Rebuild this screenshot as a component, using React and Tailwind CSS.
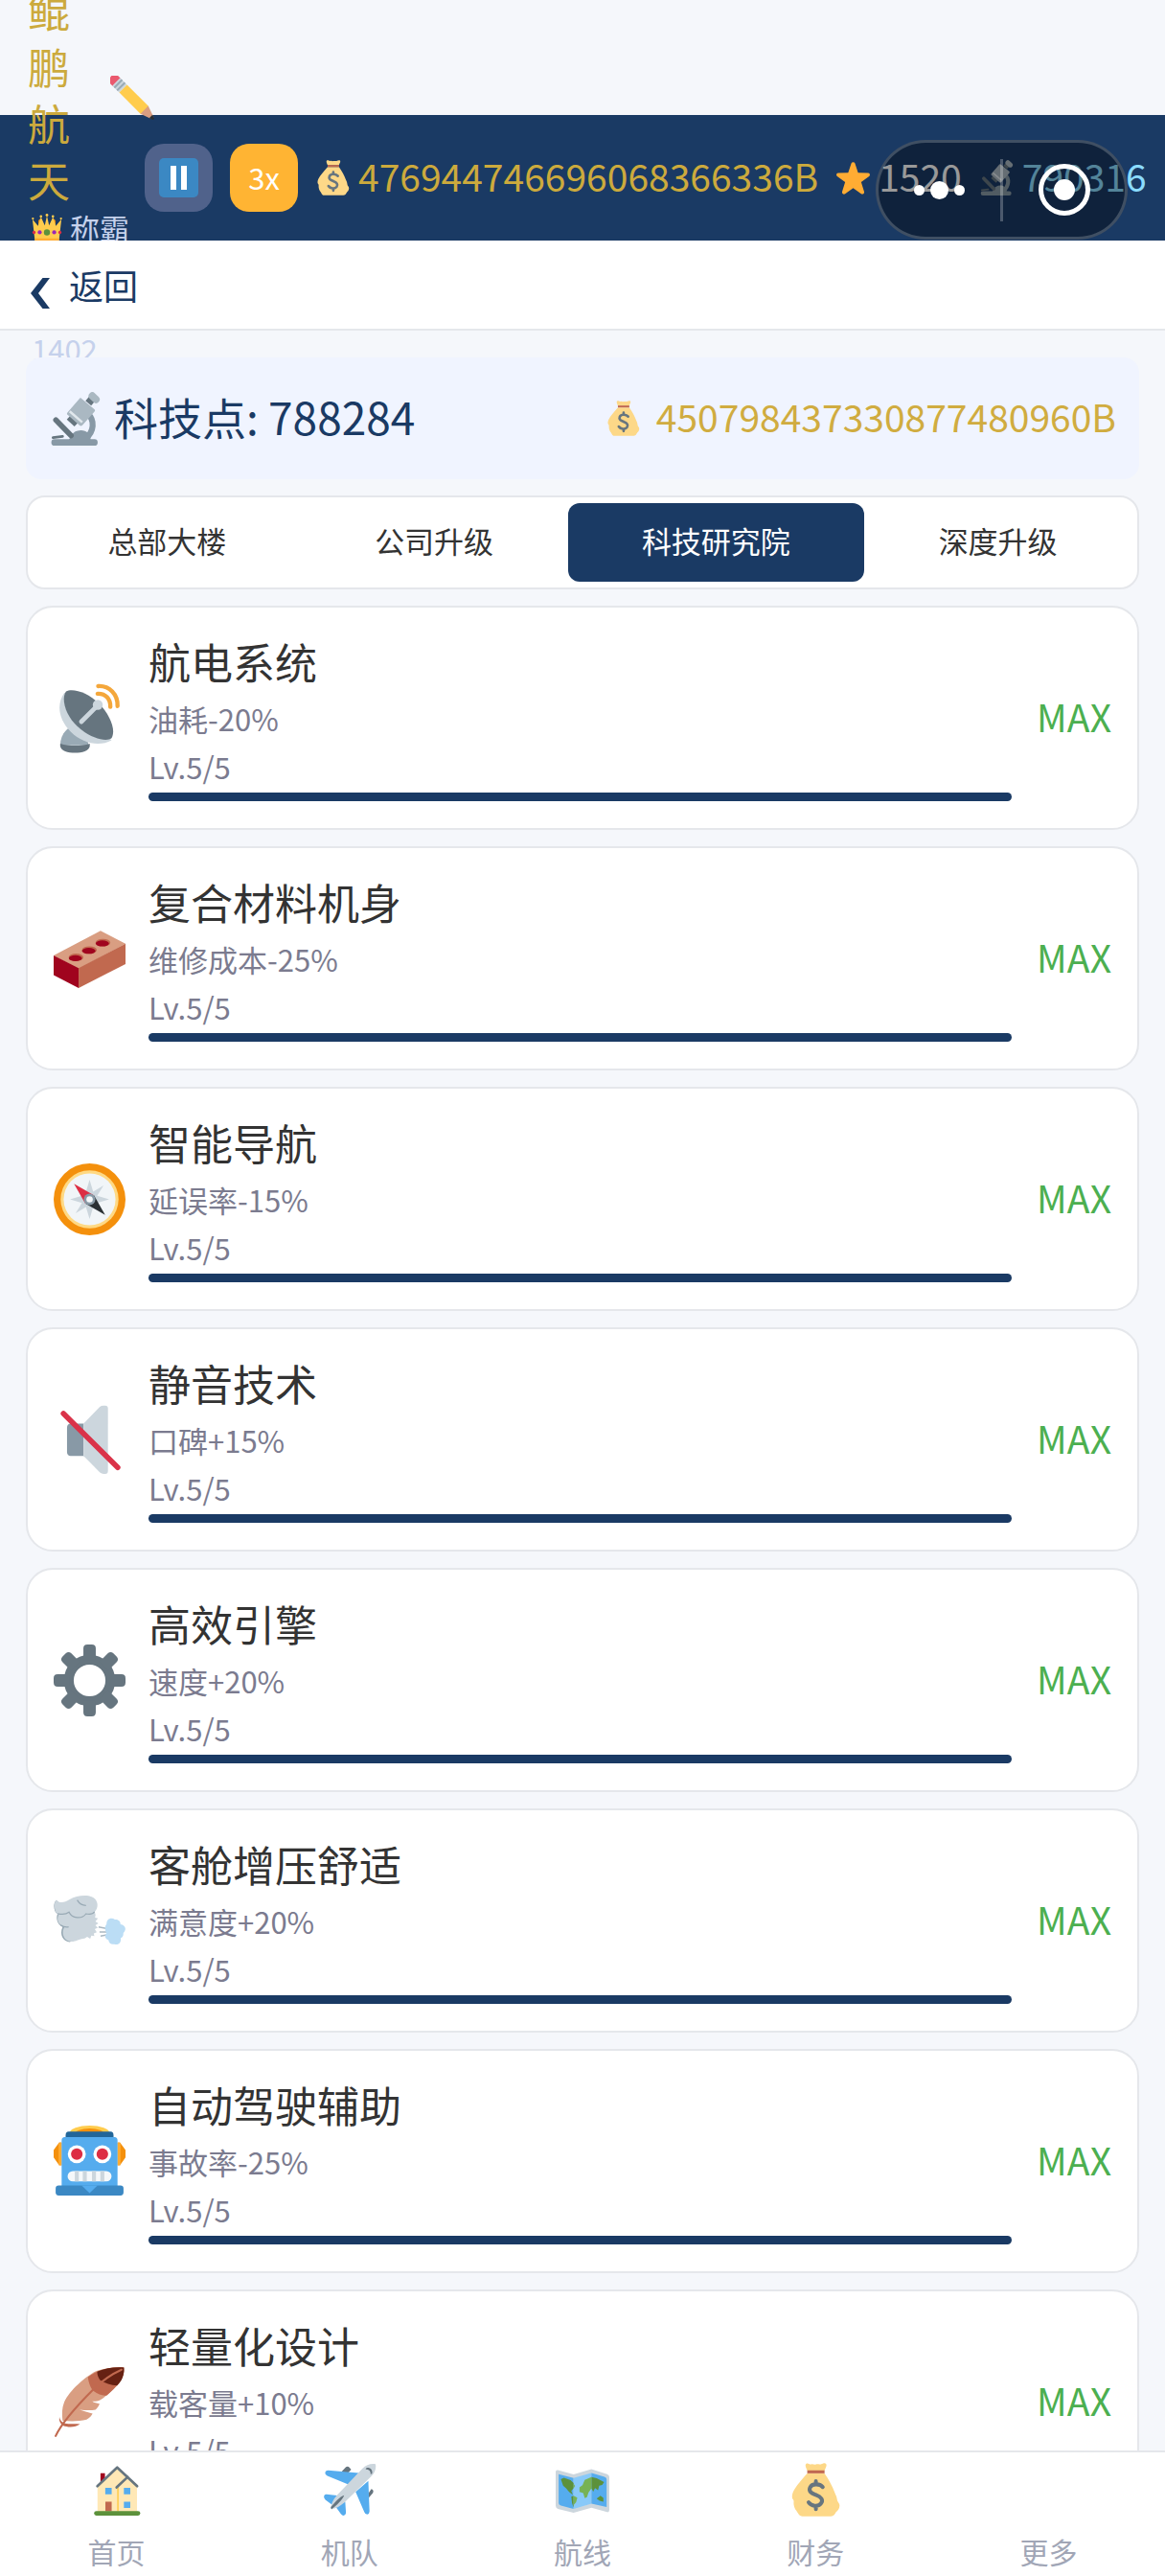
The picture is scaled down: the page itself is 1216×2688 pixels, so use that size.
import React from "react";

function Icon({ className, children }) {
  return (
    <svg viewBox="0 0 36 36" aria-hidden="true" className={"block shrink-0 " + className}>
      {children}
    </svg>
  );
}

const MoneyBag = ({ className }) => (
  <Icon className={className}>
    <path fill="#FDD888" d="M12.6 7C9 11 5 15.500 3.200 19.300 2.300 21.500 2.200 23 2.800 24.200c1.200 1 .5 2 .8 4 .4 2.800 1.800 3.800 2.600 5.300.6 1.200 1.500 2.300 3 2.300h19.300c1.800 0 2.800-1.500 3.400-2.800 1-.8 2.300-2 2.400-4.200 0-2-1.600-2.600-1.700-4.300-.2-1.500-.5-2.500-1.300-4C29.500 15.500 27 11 24.200 7z" />
    <path fill="#FDD888" d="M12.600 5.200C12 3.500 10.800 1.800 11.800.6c1.200-1 2.200.6 3.400.3 1.200-.4 2 .5 3.200.1 1.300-.4 2 .3 3.300-.1 1.200-.3 2.600-1.200 3.500-.3.900 1.300-.6 3-1 4.600z" />
    <path fill="#C1694F" d="M12.600 5h11.600v2H12.600z" />
    <path fill="none" stroke="#67757F" strokeWidth="2.600" strokeLinecap="round" d="M23 16.200c-1.500-2-7-2.900-8.500.2-1.400 3.400 2 4.200 4.300 5.200 3 1.100 4.800 3.300 3 5.600-2.100 2.600-6.500 1.700-8.300-.8M18.400 12.300v1.500M18.400 29v2" />
  </Icon>
);

const Star = ({ className }) => (
  <Icon className={className}>
    <path fill="#FFAC33" d="M27.287 34.627c-.404 0-.806-.124-1.152-.371L18 28.422l-8.135 5.834a1.970 1.970 0 0 1-2.312-.008 1.971 1.971 0 0 1-.721-2.194l3.034-9.792-8.062-5.681a1.980 1.980 0 0 1-.708-2.203 1.978 1.978 0 0 1 1.866-1.363L12.947 13l3.179-9.549a1.976 1.976 0 0 1 3.749 0L23 13l10.036.015a1.975 1.975 0 0 1 1.159 3.566l-8.062 5.681 3.034 9.792a1.970 1.970 0 0 1-.72 2.194 1.957 1.957 0 0 1-1.160.379z" />
  </Icon>
);

const Microscope = ({ className }) => (
  <Icon className={className}>
    <path fill="none" stroke="#8899A6" strokeWidth="4" d="M26 14.500c5 4.500 4.500 12-1.500 17" />
    <path fill="#8899A6" d="M3.800 31.700h9.700c1.500-1 1.500-5.800 8-6 4 0 6 2.500 6.500 6h2.600a2.150 2.150 0 0 1 0 4.300H3.800a2.150 2.150 0 0 1 0-4.300z" />
    <path fill="none" stroke="#66757F" strokeWidth="3.600" strokeLinecap="round" d="M4.700 18.800l10.200 10.400" />
    <path fill="none" stroke="#66757F" strokeWidth="1.800" strokeLinecap="round" d="M2.800 30.600l6.400-.8" />
    <path stroke="#66757F" strokeWidth="7" d="M14.600 20.800l2.600-2.800" />
    <path stroke="#66757F" strokeWidth="5" d="M26.500 7.500l3-3.500" />
    <path fill="#AAB8C2" d="M21.800 4.300l8.700 7.200c.7.600.5 1.200 0 1.800l-8 9c-.6.600-1.200.7-1.800.2l-8-7c-.7-.6-.7-1.200-.1-1.900l7.800-9c.4-.6.900-.7 1.400-.3z" />
    <path stroke="#E1E8ED" strokeWidth="1.600" d="M14 13l8.400 7.300" />
    <path stroke="#AAB8C2" strokeWidth="5" strokeLinecap="round" d="M29.200 2.700l2.400 2.300" />
  </Icon>
);

const Pencil = ({ className }) => (
  <Icon className={className}>
    <g transform="rotate(45)">
      <path fill="#EA596E" d="M3 -4.500h5v9H3Q.8 4.500 .8 2v-4Q.8-4.500 3-4.500z" />
      <path fill="#CCD6DD" d="M7 -4.500h8v9H7z" />
      <path fill="#99AAB5" d="M8.500 -4.500h1.600v9H8.500zM11.700 -4.500h1.600v9h-1.600z" />
      <path fill="#FFCC4D" d="M15 -4.500h25l1.500 4.500L40 4.500H15z" />
      <path fill="#D99E82" d="M39.500 -4.500L49 -1.200v2.400L39.500 4.500z" />
      <path fill="#292F33" d="M47 -1.900L50 -.8q.8.800 0 1.600L47 1.900z" />
    </g>
  </Icon>
);

const Crown = ({ className }) => (
  <Icon className={className}>
    <path fill="#F4900C" d="M10 7l3 10h10l3-10 2 2v20H8V9z" />
    <path fill="#FFCC4D" d="M1 7.500l6.500 8L11 5l4.500 10L18 3.500 20.500 15 25 5l3.500 10.500 6.500-8L32 34H4z" />
    <path fill="#FFAC33" d="M4 30h28v4H4z" />
    <g fill="#FFCC4D"><circle cx="1.500" cy="6.800" r="1.300" /><circle cx="11" cy="4.300" r="1.500" /><circle cx="18" cy="2.800" r="1.600" /><circle cx="25" cy="4.300" r="1.500" /><circle cx="34.500" cy="6.800" r="1.300" /></g>
    <circle cx="18" cy="23" r="3.600" fill="#5C913B" />
    <circle cx="9.500" cy="23" r="2.400" fill="#9B26B6" />
    <circle cx="26.500" cy="23" r="2.400" fill="#9B26B6" />
    <circle cx="2.800" cy="23" r="1.900" fill="#DD2E44" />
    <circle cx="33.200" cy="23" r="1.900" fill="#DD2E44" />
  </Icon>
);

const Satellite = ({ className }) => (
  <Icon className={className}>
    <path fill="#99AAB5" d="M3.300 31.500c0-3.500 1.500-6.500 4-8.500l10 7v1.500z" />
    <path fill="#66757F" d="M3.300 30.700c4.500 1.300 10.500 1.300 14.800 0v1.300c-.6 4.400-14.200 4.400-14.800 0z" />
    <path fill="#CCD6DD" d="M5.400 5.200C1.300 11 2.400 18.500 8.500 24.700 14.500 30.700 23 32.300 29 29z" />
    <path fill="#66757F" d="M6.200 4.500c3.500-1.800 11 .6 16.500 6 5.600 5.700 8.700 13.500 6.300 17.500-3 2.300-11.500-.6-17.200-6C6 16.500 3.600 8.500 6.200 4.500z" />
    <path stroke="#CCD6DD" strokeWidth="2.300" strokeLinecap="round" d="M13.900 19.700l8-8" />
    <circle cx="22.100" cy="11.300" r="2.500" fill="#CCD6DD" />
    <path fill="none" stroke="#F4A73B" strokeWidth="2.100" strokeLinecap="round" d="M22.300 1.900c5.600-.3 9.900 4.100 9.700 10M22 5.700c4-.2 6.600 2.700 6.400 6.600" />
  </Icon>
);

const Brick = ({ className }) => (
  <Icon className={className}>
    <path fill="#D99E82" d="M23.500 4L36 10.400 12.500 23 0 16.300z" />
    <path fill="#C1694F" d="M36 10.400v10.200l-23.500 12V22.700z" />
    <path fill="#A0041E" d="M0 16.300l12.500 6.400v9.900L0 26.200z" />
    <g fill="#C1694F"><ellipse cx="11.200" cy="17.300" rx="3.700" ry="1.900" /><ellipse cx="17.900" cy="13.600" rx="3.700" ry="1.900" /><ellipse cx="24.700" cy="9.900" rx="3.700" ry="1.900" /></g>
    <g fill="#A0041E"><ellipse cx="10.900" cy="17.700" rx="3.300" ry="1.500" /><ellipse cx="17.600" cy="14" rx="3.300" ry="1.500" /><ellipse cx="24.400" cy="10.300" rx="3.300" ry="1.500" /></g>
  </Icon>
);

const Compass = ({ className }) => (
  <Icon className={className}>
    <circle cx="18" cy="18" r="18" fill="#F4900C" />
    <circle cx="18" cy="18" r="14.500" fill="#FFD983" />
    <circle cx="18" cy="18" r="13" fill="#F1F5F8" />
    <path fill="#CCD6DD" d="M18 8.200l1.800 6 5.200-3.200-3.200 5.200 6 1.800-6 1.800 3.200 5.200-5.200-3.200-1.800 6-1.800-6-5.200 3.200 3.200-5.200-6-1.800 6-1.800-3.200-5.200 5.200 3.200z" />
    <path fill="#DD2E44" d="M10.200 10.200l9.800 5.600-4.200 4.200z" />
    <path fill="#292F33" d="M25.800 25.800l-9.800-5.600 4.200-4.200z" />
    <circle cx="18" cy="18" r="2.900" fill="#8899A6" />
    <circle cx="18" cy="18" r="1.600" fill="#F5F8FA" />
  </Icon>
);

const Mute = ({ className }) => (
  <Icon className={className}>
    <path fill="#8899A6" d="M8.500 9.800H15V26H8.500q-1.800 0-1.800-2V12q0-2.200 1.800-2.200z" />
    <path fill="#CCD6DD" d="M15 9.800L23 1.500q.8-.7 2-.7h.9q1.300 0 1.300 1.400v31.400q0 1.400-1.300 1.400H25q-1 0-1.800-.7L15 26z" />
    <path stroke="#DA3349" strokeWidth="2.700" strokeLinecap="round" d="M4.900 4.800l27.200 27" />
  </Icon>
);

const Gear = ({ className }) => (
  <Icon className={className}>
    <circle cx="18" cy="18" r="10.400" fill="none" stroke="#66757F" strokeWidth="4.900" />
    {[0, 45, 90, 135, 180, 225, 270, 315].map((a) => (
      <path key={a} transform={`rotate(${a} 18 18)`} fill="#66757F" d="M14.900 8V2q0-2 2-2h2.200q2 0 2 2v6z" />
    ))}
  </Icon>
);

const Wind = ({ className }) => (
  <Icon className={className}>
    <path fill="#99AAB5" d="M1.300 7.500C-.5 9 0 13.500 1.900 14.500 1 17 2 20 4.500 21 3 24 4 28 8 28.500l12-5z" />
    <path fill="#CCD6DD" d="M1.200 7.500C3 9.300 5.500 8.800 8 7.200c3.500-2 9-2.600 12-.9 2.500 1.700 2.500 5 .5 7.200.8 1.200.4 2.200.2 2.800l1.500.4-1.300 1.500 1.500 1-1.500.9 1.200 1.200-1.500.8 1 1.500-1.500.6.3 1.300-1.500-.2-.6 1.600-1.500-1-1.300.8C12 27 10.500 29 7.300 28c-3-1.400-3.300-5-1.800-7C2.500 20 1.200 17.500 2.500 15 .5 14-.3 9.500 1.200 7.500z" />
    <path fill="none" stroke="#99AAB5" strokeWidth=".6" d="M2 14.300c2 .5 4.500.2 5.700-.7 1.500 3.300 6.500 3.600 8.500.8 1.800.4 3.500.1 4.300-1M11.800 7.500c1 1.800 2.700 2.700 4.400 2.700M3.500 20c1.500 1 3 1.200 4 .9" />
    <path stroke="#AAB8C2" strokeWidth=".7" d="M22.500 21l5 1M23 23.500h5M23.500 25.600l5-1" />
    <path fill="#BBDDF5" d="M26.500 19.500c0-2.500 2.300-3.500 4.200-2.200 1.900-.2 2.800 1 2.800 2.400 2.400.3 3.300 2.600 1.400 4.300.2 1.600-.7 2.400-1.300 2.500.4 2.400-1.300 3.700-3.200 3.100-1.900.3-2.800-.8-2.900-2-1.800-.6-2.200-2.300-1-3.500-.9-1.500-1-3.500 0-4.600z" />
  </Icon>
);

const Robot = ({ className }) => (
  <Icon className={className}>
    <ellipse cx="18" cy="3.800" rx="10" ry="3.800" fill="#FFCC4D" />
    <ellipse cx="18" cy="4.600" rx="7.500" ry="3.200" fill="#F4900C" />
    <path fill="#F4900C" d="M4 8.400v11.500H2.800L0 16v-3.800l2.800-3.800zM32 8.400v11.500h1.200L36 16v-3.800l-2.800-3.800z" />
    <path fill="#FFAC33" d="M2.500 8.600H4v11.200H2.500zM32 8.600h1.500v11.200H32z" />
    <path fill="#55ACEE" d="M5.500 5.700h25Q32 5.700 32 7.500V31H4V7.500q0-1.800 1.500-1.800z" />
    <path fill="#226699" d="M7.500 3h21Q30 3 30 5v.8H6V5q0-2 1.500-2z" />
    <circle cx="11.600" cy="14.300" r="4.500" fill="#fff" /><circle cx="24.400" cy="14.300" r="4.500" fill="#fff" />
    <circle cx="11.600" cy="14.300" r="2.900" fill="#DD2E44" /><circle cx="24.400" cy="14.300" r="2.900" fill="#DD2E44" />
    <rect x="7" y="22.800" width="22" height="5.200" rx="2.600" fill="#F5F8FA" />
    <path fill="#CCD6DD" d="M10.600 22.800h2V28h-2zM14.600 22.800h2V28h-2zM19.200 22.800h2V28h-2zM23.400 22.800h2V28h-2z" />
    <path fill="#3B88C3" d="M2.500 30h31q1.500 0 1.500 1.500v2q0 1.500-1.500 1.500h-31Q1 35 1 33.500v-2Q1 30 2.500 30z" />
    <path fill="#55ACEE" d="M14 30h8l-4 3.800z" />
  </Icon>
);

const Feather = ({ className }) => (
  <Icon className={className}>
    <path fill="#D99E82" d="M35.200.7C31 .2 25 1 21 2.600 16 5.200 8 12 5.300 18c-1.200 3-1.200 6-.8 9.400 4.500.3 8.500.3 12-.6 1.600-1 2.600-2 3-3-2.500-.7-4.500-1.400-6.500-2 3 .3 5.500.5 8 0 1-1 1.600-1.900 2-3-1.500-.3-2.600-.5-3.700-1.200 3 .2 5-1 7-2.900 5-3.700 9.500-8.500 8.900-14z" />
    <path fill="#C1694F" d="M35.200.7C31 .2 22 1.500 17.200 5.500c.2 2.500 1.300 5.500 2.800 7 2.500 1.800 4.800 2.500 6.700 2.100 5-4.600 9.100-8.400 8.500-13.900z" />
    <path fill="#662113" d="M35.200.7C31 .3 26 .9 21.800 2.800c0 1.700.6 3 1.400 4.200 2.500 1.700 5.500 2.600 8.600 2.700 2.500-2.300 3.700-5.500 3.400-9z" />
    <path fill="none" stroke="#C1694F" strokeWidth="1" strokeLinecap="round" d="M1 35c3-6.500 9.500-14 19-23.500C24 7.600 28 4.500 34 1.800" />
    <path fill="#C1694F" d="M2.900 25.400c.3 2.300 2 3.300 4.500 3.500 2 0 3.500-.1 5.800.1-2.200 1.700-6 1.800-8.500.7-1.500-1-2.200-2.600-1.800-4.300z" />
  </Icon>
);

const House = ({ className }) => (
  <Icon className={className}>
    <path fill="#A0041E" d="M7 6.900h3V14H7z" />
    <path fill="#FFE8B6" d="M5 15L18.200 4l13.300 11v17.800H5z" />
    <path fill="#FFCC4D" d="M18.200 16h1v16.500h-1z" />
    <path fill="none" stroke="#66757F" strokeWidth="1.700" strokeLinecap="round" strokeLinejoin="round" d="M4.900 15.600L18.200 3l13.400 12.600M25.300 9.400l-7.500 7" />
    <path fill="#55ACEE" d="M10.200 16.700h4.300V21h-4.300zM22.700 16.700H27V21h-4.300zM22.700 26H27v4.200h-4.300z" />
    <path fill="#C1694F" d="M10.300 26h4.200v6.500h-4.200z" />
    <rect x="2.700" y="32.300" width="31" height="3" rx="1.500" fill="#5C913B" />
  </Icon>
);

const Plane = ({ className }) => (
  <Icon className={className}>
    <path fill="#66757F" d="M12.500 6l3-3.200q1.200-.8 2.300.3l1.200 1.400-3 3zM29.500 22l3 -4.500 1 .5q.8 1 0 2.200l-3.500 4z" />
    <path fill="#55ACEE" d="M1.500 6.500q.5-1.500 2-1.500L24 6.700l-6.500 8L3 8.700q-1.600-.6-1.500-2.200zM30.500 12l.8 20.500q0 1.700-1.500 2-1.500 0-2-1.500L22 19.500zM.7 22.500Q1 20.800 2.500 21l8.500 1-5 6-4.300-3.300Q.7 23.800.7 22.500zM15 26l.5 7.500q0 1.500-1.500 1.800-1.200 0-2-1.200l-3.500-4.800z" />
    <path fill="#CCD6DD" d="M35.300.8c.8 3-.6 6-3 8.300L14.500 26.500C11 29.500 8 31 5.300 30.700c0-2.500 1.400-6 4.300-9.200L26.500 3.800C29 1.400 32.200.2 35.300.8z" />
    <path fill="#66757F" d="M5.800 31.200l-.5-1.500c3-3.500 6-7 9-8-1.200 3.200-5 6.600-8.500 9.500zM29.200 3.300c2.500-.5 4.500 1.300 3.800 4l-1 .3c.2-2-1-3.200-3.300-3.200z" />
  </Icon>
);

const WorldMap = ({ className }) => (
  <Icon className={className}>
    <path fill="#CCD6DD" d="M0 6q0-1.500 1.500-1.200L12 7.700l12-3.500L34.500 7.500Q36 8 36 9.500v22q0 1.800-1.500 1.500L24 30l-12 3.500L1.500 30.800Q0 30.300 0 28.800z" />
    <path fill="#55ACEE" d="M2 7.500l10 2.700v20.600L3.500 28.600Q2 28.200 2 27z" />
    <path fill="#88C9F9" d="M12 10.200l12-3.500v20.600l-12 3.500z" />
    <path fill="#55ACEE" d="M24 6.700l8.700 2.700Q34.200 9.800 34.200 11v18.600L24 27.300z" />
    <path fill="#5C913B" d="M3.500 11l2-1 4.500 1.500 2 2v3.300l-1.500 2 1 2.500-2.500-1.800-2-2.500-2-1.800zM24 9.500l3.500.8 5 2.500-1.300 2-2 .5-.8 3-2-1.500-1.200 2.500L24 17zM27.500 24l2.500-2 2 1.500v2.500l-2.500-.6zM10.500 22.700l1.500-.7v8l-1-3z" />
    <path fill="#77B255" d="M12 14l1 1.500-1 1.500zM12 22l2.500 1.300-.8 3-1.700 2zM24 9.500l-4.500 1.900-1.500 3.500-2 1.500v3l2.500.8 1 3.500 1.500-.7 1-3L24 17z" />
  </Icon>
);

function Stat({ icon: I, value, className }) {
  return (
    <div className="flex items-center gap-2">
      <I className="size-[37px]" />
      <span className={"whitespace-nowrap pb-1.5 text-[39px] leading-[44px] " + className}>{value}</span>
    </div>
  );
}

const TABS = ["总部大楼", "公司升级", "科技研究院", "深度升级"];

const TECHS = [
  { icon: Satellite, name: "航电系统", effect: "油耗-20%" },
  { icon: Brick, name: "复合材料机身", effect: "维修成本-25%" },
  { icon: Compass, name: "智能导航", effect: "延误率-15%" },
  { icon: Mute, name: "静音技术", effect: "口碑+15%" },
  { icon: Gear, name: "高效引擎", effect: "速度+20%" },
  { icon: Wind, name: "客舱增压舒适", effect: "满意度+20%" },
  { icon: Robot, name: "自动驾驶辅助", effect: "事故率-25%" },
  { icon: Feather, name: "轻量化设计", effect: "载客量+10%" },
];

const NAV = [
  { icon: House, label: "首页" },
  { icon: Plane, label: "机队" },
  { icon: WorldMap, label: "航线" },
  { icon: MoneyBag, label: "财务" },
  { icon: null, label: "更多" },
];

function TechCard({ icon: I, name, effect }) {
  return (
    <li className="flex items-center gap-6 rounded-[28px] border-2 border-[#e5e7eb] bg-white px-[27px] py-7">
      <I className="size-[75px]" />
      <div className="flex min-w-0 flex-1 flex-col">
        <h2 className="text-[44px] leading-[56px] text-[#333333]">{name}</h2>
        <p className="mt-2 text-[31px] leading-[48px] text-[#7b7b8f]">{effect}</p>
        <p className="mt-0.5 text-[31px] leading-[48px] text-[#7b7b8f]">Lv.5/5</p>
        <div className="mt-[3px] h-[9px] rounded-full bg-[#1a3a64]" />
      </div>
      <span className="w-20 pb-1 text-right text-[39px] leading-[48px] text-[#4caf50]">MAX</span>
    </li>
  );
}

export default function App() {
  return (
    <div className="relative flex h-screen flex-col overflow-hidden bg-[#f5f7fb] pt-[120px] font-['Noto_Sans_CJK_SC',sans-serif]">
      <header className="flex h-[131px] shrink-0 items-center gap-[18px] bg-[#1a3a64] pl-[29px]">
        <div className="flex w-[104px] shrink-0 flex-col pb-1.5">
          <div className="flex items-center gap-[42px]">
            <h1 className="w-11 shrink-0 text-[44px] leading-[59px] text-[#ccaa3d]">鲲鹏航天</h1>
            <button type="button" aria-label="编辑名称" className="pt-1.5">
              <Pencil className="size-[46px]" />
            </button>
          </div>
          <div className="flex h-[168px] flex-col justify-between text-[31px] leading-[42px] text-[#c5d1ec]">
            <span className="flex items-center gap-2 whitespace-nowrap pl-1">
              <Crown className="size-8" />
              称霸
            </span>
            <span className="pl-1">1402</span>
          </div>
        </div>
        <button
          type="button"
          aria-label="暂停"
          className="flex size-[71px] shrink-0 items-center justify-center rounded-[20px] bg-[#50628b]"
        >
          <span className="flex size-[41px] items-center justify-center gap-[5px] rounded-[5px] bg-[#3b88c3]">
            <span className="h-[25px] w-[6px] bg-white" />
            <span className="h-[25px] w-[6px] bg-white" />
          </span>
        </button>
        <button
          type="button"
          className="size-[71px] shrink-0 rounded-[20px] bg-[#ffb433] pb-0.5 text-[31px] leading-[44px] text-white"
        >
          3x
        </button>
        <Stat icon={MoneyBag} value="476944746696068366336B" className="text-[#ccaa3d]" />
        <Stat icon={Star} value="1520" className="text-white" />
        <Stat icon={Microscope} value="790316" className="text-[#8bdcff]" />
      </header>

      <div className="absolute right-[39px] top-[146px] z-20 flex h-[104px] w-[263px] items-center rounded-full border-[3px] border-white/20 bg-black/40">
        <button type="button" aria-label="菜单" className="flex flex-1 items-center justify-center gap-[6px]">
          <span className="size-[11px] rounded-full bg-white" />
          <span className="size-[19px] rounded-full bg-white" />
          <span className="size-[11px] rounded-full bg-white" />
        </button>
        <span className="h-[65px] w-[3px] bg-white/25" />
        <button type="button" aria-label="关闭" className="flex flex-1 items-center justify-center">
          <span className="flex size-[54px] items-center justify-center rounded-full border-[5px] border-white">
            <span className="size-[22px] rounded-full bg-white" />
          </span>
        </button>
      </div>

      <div className="relative z-10 flex h-[94px] shrink-0 items-center border-b-2 border-[#e5e7eb] bg-white px-8">
        <button type="button" className="flex items-start gap-5 text-[36px] leading-[52px] text-[#1a3a64]">
          <svg viewBox="0 0 20 32" aria-hidden="true" className="mt-[19px] h-8 w-5">
            <path fill="#1a3a64" d="M12.500 0H20L8 16l12 16h-7.500L0 16z" />
          </svg>
          返回
        </button>
      </div>

      <main className="min-h-0 flex-1 overflow-y-auto px-[27px] pt-7 [scrollbar-width:none]">
        <section className="relative z-10 flex h-[127px] items-center justify-between rounded-2xl bg-[#f0f4ff] px-6">
          <div className="flex items-center gap-3">
            <Microscope className="size-14" />
            <span className="pb-1.5 text-[46px] leading-[60px] text-[#1a3a64]">科技点: 788284</span>
          </div>
          <div className="flex items-center gap-4">
            <MoneyBag className="size-[37px]" />
            <span className="pb-1.5 text-[39px] leading-[48px] text-[#d0ac40]">450798437330877480960B</span>
          </div>
        </section>

        <nav aria-label="升级分类" className="mt-[17px] flex rounded-[20px] border-2 border-[#e5e7eb] bg-white p-1.5">
          {TABS.map((t) => (
            <button
              key={t}
              type="button"
              aria-pressed={t === "科技研究院"}
              className={
                "h-[82px] flex-auto rounded-xl pb-1 text-[31px] leading-[44px] " +
                (t === "科技研究院" ? "bg-[#1a3a64] text-white" : "text-[#333333]")
              }
            >
              {t}
            </button>
          ))}
        </nav>

        <ul className="mt-[17px] flex flex-col gap-[17px]">
          {TECHS.map((t) => (
            <TechCard key={t.name} {...t} />
          ))}
        </ul>
      </main>

      <nav aria-label="主导航" className="relative z-10 grid h-[131px] shrink-0 grid-cols-5 border-t-2 border-[#e5e7eb] bg-white">
        {NAV.map(({ icon: I, label }) => (
          <a key={label} href="#" className="flex flex-col items-center gap-3.5 pt-[11px] text-[30px] leading-[44px] text-[#a1a6b6]">
            {I ? <I className="size-14" /> : <span className="size-14" />}
            {label}
          </a>
        ))}
      </nav>
    </div>
  );
}
